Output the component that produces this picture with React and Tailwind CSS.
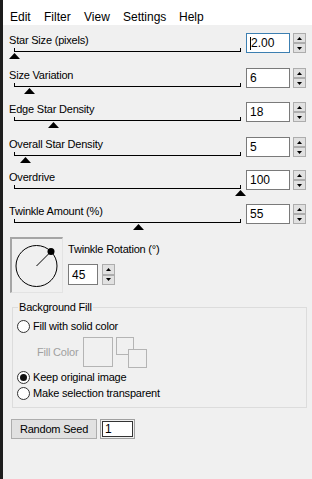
import React from "react";

const rows = [
  { label: "Star Size (pixels)", value: "2.00", thumb: 14, h: "h-[35px]", focus: true },
  { label: "Size Variation", value: "6", thumb: 29, h: "h-[34px]" },
  { label: "Edge Star Density", value: "18", thumb: 53, h: "h-[35px]" },
  { label: "Overall Star Density", value: "5", thumb: 25, h: "h-[33px]" },
  { label: "Overdrive", value: "100", thumb: 240, h: "h-[34px]" },
  { label: "Twinkle Amount (%)", value: "55", thumb: 138, h: "h-[33px]" },
];

const Spinner = ({ h = "h-[20px]" }) => (
  <div className={`flex flex-col w-[13px] ${h}`}>
    <div className="flex-1 flex items-center justify-center border border-[#adadad] bg-[#e1e1e1]">
      <svg width="5" height="3" viewBox="0 0 5 3">
        <polygon points="2.5,0 5,3 0,3" fill="#000" />
      </svg>
    </div>
    <div className="flex-1 flex items-center justify-center border border-[#adadad] bg-[#e1e1e1]">
      <svg width="5" height="3" viewBox="0 0 5 3">
        <polygon points="0,0 5,0 2.5,3" fill="#000" />
      </svg>
    </div>
  </div>
);

const Radio = ({ checked, label }) => (
  <div className="flex items-center h-[16px] pl-[4px]">
    <div className="w-[13px] h-[13px] rounded-full border border-[#333] bg-white flex items-center justify-center">
      {checked && <div className="w-[7px] h-[7px] rounded-full bg-[#111]" />}
    </div>
    <span className="ml-[3px] text-[11px] leading-[15px] tracking-[-0.2px]">{label}</span>
  </div>
);

const SliderRow = ({ row }) => (
  <div className={`flex items-start ${row.h}`}>
    <div className="w-[237px]">
      <div className="text-[11px] leading-[15px] tracking-[-0.2px]">{row.label}</div>
      <div className="relative ml-[5px] w-[227px] h-[4px] border-x border-b border-black">
        <svg
          className="absolute top-[5px]"
          style={{ left: row.thumb - 20 }}
          width="11"
          height="6"
          viewBox="0 0 11 6"
        >
          <polygon points="5.5,0 11,6 0,6" fill="#000" />
        </svg>
      </div>
    </div>
    <div
      className={`w-[44px] h-[20px] bg-white border flex items-center pl-[3px] text-[12px] ${
        row.focus ? "border-[#3c7fb1]" : "border-[#7a7a7a]"
      }`}
    >
      {row.focus && <span className="h-[13px] border-l border-black" />}
      {row.value}
    </div>
    <div className="ml-[3px]">
      <Spinner />
    </div>
  </div>
);

const App = () => {
  return (
    <div className="flex w-[312px] h-[479px] overflow-hidden bg-[#f0f0f0] text-black font-['Liberation_Sans',Arial,sans-serif]">
      <div className="w-[3px] h-full bg-[#1d1d1d]" />
      <div className="flex-1 flex flex-col">
        <div className="h-[25px] bg-white flex pl-[7px] pt-[10px] text-[12px] leading-[15px]">
          <span className="w-[34px]">Edit</span>
          <span className="w-[40px]">Filter</span>
          <span className="w-[39px]">View</span>
          <span className="w-[56px]">Settings</span>
          <span>Help</span>
        </div>

        <div className="pl-[6px] mt-[8px]">
          {rows.map((row) => (
            <SliderRow key={row.label} row={row} />
          ))}

          <div className="flex h-[55px]">
            <div className="ml-[1px] w-[53px] h-[56px] border-t-2 border-l-2 border-[#a5a5a5] border-r border-b border-r-[#e3e3e3] border-b-[#e3e3e3]">
              <svg width="50" height="53" viewBox="0 0 50 53">
                <circle cx="24.5" cy="27" r="20.5" fill="none" stroke="#000" strokeWidth="1" />
                <line x1="24.5" y1="27" x2="39" y2="12.5" stroke="#000" strokeWidth="1" />
                <circle cx="39" cy="12.5" r="3.5" fill="#000" />
              </svg>
            </div>
            <div className="ml-[5px] pt-[5px]">
              <div className="text-[11px] leading-[15px] tracking-[-0.2px]">Twinkle Rotation (°)</div>
              <div className="flex mt-[7px]">
                <div className="w-[30px] h-[21px] bg-white border border-[#7a7a7a] flex items-center pl-[3px] text-[12px]">
                  45
                </div>
                <div className="ml-[4px]">
                  <Spinner h="h-[21px]" />
                </div>
              </div>
            </div>
          </div>

          <fieldset className="mt-[8px] ml-[3px] w-[295px] border border-[#dcdcdc] pt-[3px] pb-[6px]">
            <legend className="ml-[5px] px-[1px] text-[11px] leading-[15px] tracking-[-0.2px]">Background Fill</legend>
            <Radio label="Fill with solid color" />
            <div className="flex items-center mt-[3px] h-[30px] pl-[24px]">
              <span className="w-[46px] text-[11px] tracking-[-0.2px] text-[#a0a0a0]">Fill Color</span>
              <div className="w-[30px] h-[30px] border border-[#b4b4b4]" />
              <svg className="ml-[3px]" width="31" height="31" viewBox="0 0 31 31">
                <rect x="0.5" y="0.5" width="17" height="17" fill="#f0f0f0" stroke="#b4b4b4" />
                <rect x="12.5" y="12.5" width="18" height="18" fill="#f0f0f0" stroke="#b4b4b4" />
              </svg>
            </div>
            <div className="mt-[2px]">
              <Radio checked label="Keep original image" />
              <Radio label="Make selection transparent" />
            </div>
          </fieldset>

          <div className="flex mt-[11px] ml-[2px]">
            <button className="w-[86px] h-[20px] bg-[#e1e1e1] border border-[#adadad] text-[11px] tracking-[-0.2px]">
              Random Seed
            </button>
            <div className="ml-[3px] w-[35px] h-[20px] border border-[#a0a0a0] p-px">
              <div className="w-full h-full bg-white border border-[#333] flex items-center pl-[2px] text-[12px]">
                1
              </div>
            </div>
          </div>
        </div>
      </div>
    </div>
  );
};

export default App;
